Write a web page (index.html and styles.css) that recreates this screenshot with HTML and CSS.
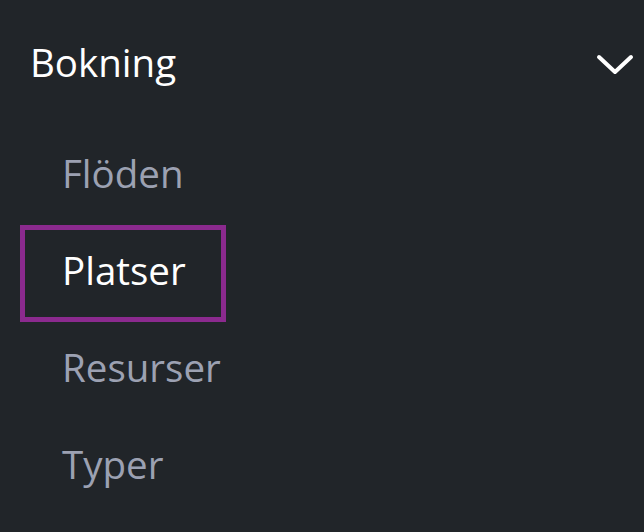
FILE: index.html
```html
<!DOCTYPE html>
<html lang="sv">
<head>
<meta charset="utf-8">
<link rel="stylesheet" href="styles.css">
</head>
<body>
<nav class="menu">
  <div class="menu-header">
    <span class="menu-title">Bokning</span>
    <svg class="chevron" width="40" height="24" viewBox="0 0 40 24" aria-hidden="true">
      <path d="M4 4 L20 19 L36 4" fill="none" stroke="#ffffff" stroke-width="4" stroke-linecap="round" stroke-linejoin="round"/>
    </svg>
  </div>
  <ul class="menu-list">
    <li class="menu-item">Flöden</li>
    <li class="menu-item active">Platser</li>
    <li class="menu-item">Resurser</li>
    <li class="menu-item">Typer</li>
  </ul>
</nav>
</body>
</html>
```
FILE: styles.css
```css
html, body {
  margin: 0;
  padding: 0;
  background: #212529;
}
body {
  width: 644px;
  height: 532px;
  overflow: hidden;
  font-family: "Open Sans", "Noto Sans", sans-serif;
}
.menu-header {
  height: 128px;
  display: flex;
  align-items: center;
  justify-content: space-between;
  padding: 0 9px 0 30px;
}
.menu-title {
  color: #ffffff;
  font-size: 38.5px;
  line-height: 1;
  padding-bottom: 4px;
}
.chevron {
  display: block;
  margin-top: 2px;
}
.menu-list {
  list-style: none;
  margin: 0;
  padding: 0 0 0 20px;
  display: flex;
  flex-direction: column;
  align-items: flex-start;
}
.menu-item {
  box-sizing: border-box;
  height: 97px;
  display: flex;
  align-items: center;
  padding: 0 35px 6px 37px;
  border: 5px solid transparent;
  color: #9ca1b2;
  font-size: 38.5px;
  line-height: 1;
}
.menu-item.active {
  color: #ffffff;
  border-color: #8b2a8e;
}
```
